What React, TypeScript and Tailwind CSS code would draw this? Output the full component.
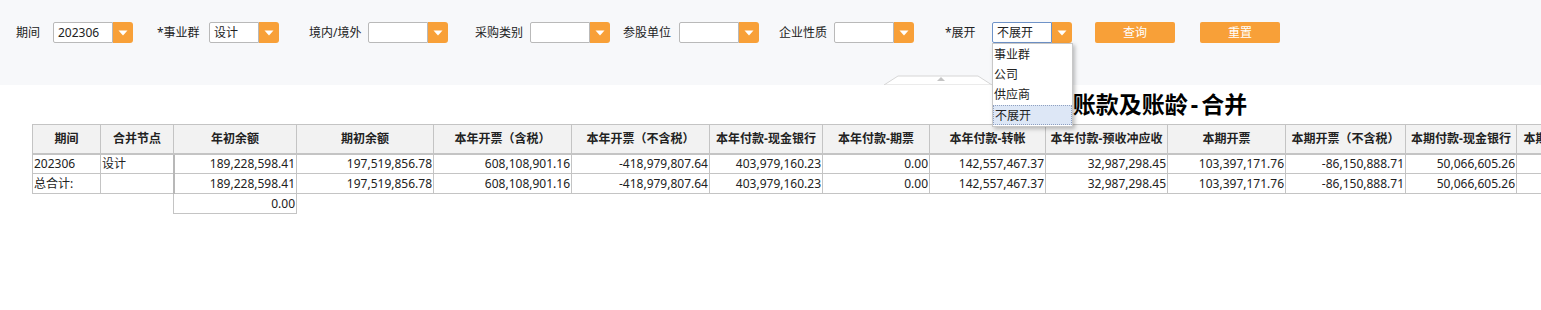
import { useState } from 'react';

type Filter = {
  label: string;
  gap: string;
  labelW: string;
  boxW: string;
  value: string;
  open?: boolean;
};

const filters: Filter[] = [
  { label: '期间', gap: 'ml-[16px]', labelW: 'w-[37px]', boxW: 'w-[80px]', value: '202306' },
  { label: '*事业群', gap: 'ml-[24px]', labelW: 'w-[52px]', boxW: 'w-[70px]', value: '设计' },
  { label: '境内/境外', gap: 'ml-[30px]', labelW: 'w-[59px]', boxW: 'w-[80px]', value: '' },
  { label: '采购类别', gap: 'ml-[27px]', labelW: 'w-[55px]', boxW: 'w-[80px]', value: '' },
  { label: '参股单位', gap: 'ml-[13px]', labelW: 'w-[56px]', boxW: 'w-[80px]', value: '' },
  { label: '企业性质', gap: 'ml-[20px]', labelW: 'w-[55px]', boxW: 'w-[80px]', value: '' },
  { label: '*展开', gap: 'ml-[31px]', labelW: 'w-[47px]', boxW: 'w-[80px]', value: '不展开', open: true },
];

const expandOptions = ['事业群', '公司', '供应商', '不展开'];

const columns = [
  { title: '期间', w: 'w-[68px]' },
  { title: '合并节点', w: 'w-[73px]' },
  { title: '年初余额', w: 'w-[123px]' },
  { title: '期初余额', w: 'w-[137px]' },
  { title: '本年开票（含税）', w: 'w-[138px]' },
  { title: '本年开票（不含税）', w: 'w-[138px]' },
  { title: '本年付款-现金银行', w: 'w-[113px]' },
  { title: '本年付款-期票', w: 'w-[107px]' },
  { title: '本年付款-转帐', w: 'w-[116px]' },
  { title: '本年付款-预收冲应收', w: 'w-[122px]' },
  { title: '本期开票', w: 'w-[118px]' },
  { title: '本期开票（不含税）', w: 'w-[120px]' },
  { title: '本期付款-现金银行', w: 'w-[111px]' },
  { title: '本期付款-期票', w: 'w-[90px]' },
  { title: '本期付款-转帐', w: 'w-[116px]' },
];

const amounts = [
  '189,228,598.41',
  '197,519,856.78',
  '608,108,901.16',
  '-418,979,807.64',
  '403,979,160.23',
  '0.00',
  '142,557,467.37',
  '32,987,298.45',
  '103,397,171.76',
  '-86,150,888.71',
  '50,066,605.26',
  '',
  '',
];

const rows = [
  { period: '202306', node: '设计' },
  { period: '总合计:', node: '' },
];

function SelectBox({ value, width, focused }: { value: string; width: string; focused?: boolean }) {
  return (
    <div className={'flex h-[21px] ' + width}>
      <div
        className={
          'flex-1 bg-white border rounded-l-[2px] pl-[4px] text-[12px] leading-[19px] text-[#222] ' +
          (focused ? 'border-[#6f93c8]' : 'border-[#b9b9b9]')
        }
      >
        {value}
      </div>
      <div className="w-[20px] bg-[#f8a038] rounded-r-[3px] flex items-center justify-center">
        <svg width="10" height="6" viewBox="0 0 10 6">
          <path d="M0.5 0.5 L9.5 0.5 L5 5.5 Z" fill="#fff" />
        </svg>
      </div>
    </div>
  );
}

export default function App() {
  const [expand] = useState('不展开');

  return (
    <div className="w-[1541px] h-[310px] overflow-hidden bg-white text-[#222]" style={{ fontFamily: '"Noto Sans", "Noto Sans CJK SC", sans-serif' }}>
      {/* filter panel */}
      <div className="relative h-[85px] bg-[#f7f8fa]">
        <div className="flex items-center pt-[22px]">
          {filters.map((f) => (
            <div key={f.label} className={'flex items-center ' + f.gap}>
              <span className={'text-[12px] text-[#222] ' + f.labelW}>{f.label}</span>
              <div className="relative">
                <SelectBox value={f.open ? expand : f.value} width={f.boxW} focused={f.open} />
                {f.open && (
                  <div className="absolute left-0 top-[21px] z-20 w-[81px] bg-white border border-[#c8c8c8] shadow-[2px_2px_4px_rgba(0,0,0,0.25)] py-[1px]">
                    {expandOptions.map((o) => (
                      <div
                        key={o}
                        className={
                          'h-[20px] pl-[1px] text-[12px] leading-[20px] ' +
                          (o === expand ? 'bg-[#dde7f6] border border-dotted border-[#8fa0c0] leading-[18px]' : '')
                        }
                      >
                        {o}
                      </div>
                    ))}
                  </div>
                )}
              </div>
            </div>
          ))}
          <button className="ml-[23px] h-[21px] w-[80px] rounded-[2px] bg-[#f8a038] text-white text-[12px] leading-[21px]">查询</button>
          <button className="ml-[25px] h-[21px] w-[80px] rounded-[2px] bg-[#f8a038] text-white text-[12px] leading-[21px]">重置</button>
        </div>

        {/* collapse tab */}
        <svg className="absolute left-[884px] bottom-0" width="108" height="10" viewBox="0 0 108 10">
          <path d="M0 10 L14 1 L94 1 L108 10 Z" fill="#fff" stroke="#d6d6d6" strokeWidth="1" />
          <path d="M53 6 L57 2 L61 6 Z" fill="#c4c4c4" />
        </svg>
      </div>

      {/* report */}
      <div className="w-[2242px] pl-[32px]">
        <div className="h-[39px] text-center text-[23px] font-bold leading-[39px] text-black">
          应付账款及账龄<span className="px-[3px]">-</span>合并
        </div>
        <table className="table-fixed border-collapse text-[12px]">
          <colgroup>
            {columns.map((c) => (
              <col key={c.title} className={c.w} />
            ))}
          </colgroup>
          <thead>
            <tr className="h-[29px] bg-[#f2f2f2]">
              {columns.map((c) => (
                <th key={c.title} className="border border-[#c4c4c4] border-b-2 font-bold text-[12px] text-[#222] whitespace-nowrap overflow-hidden">
                  {c.title}
                </th>
              ))}
            </tr>
          </thead>
          <tbody>
            {rows.map((r) => (
              <tr key={r.period} className="h-[20px]">
                <td className="border border-[#c4c4c4] pl-[1px] leading-[18px]">{r.period}</td>
                <td className="border border-[#c4c4c4] pl-[1px] leading-[18px]">{r.node}</td>
                {amounts.map((a, i) => (
                  <td
                    key={i}
                    className={
                      'border border-[#c4c4c4] text-right pr-[1px] leading-[18px] whitespace-nowrap ' +
                      (i === 0 ? 'border-l-2 border-l-[#b8b8b8]' : '')
                    }
                  >
                    {a}
                  </td>
                ))}
              </tr>
            ))}
            <tr className="h-[20px]">
              <td />
              <td />
              <td className="border border-[#c4c4c4] text-right pr-[1px] leading-[18px]">0.00</td>
              {amounts.slice(1).map((_, i) => (
                <td key={i} />
              ))}
            </tr>
          </tbody>
        </table>
      </div>
    </div>
  );
}
